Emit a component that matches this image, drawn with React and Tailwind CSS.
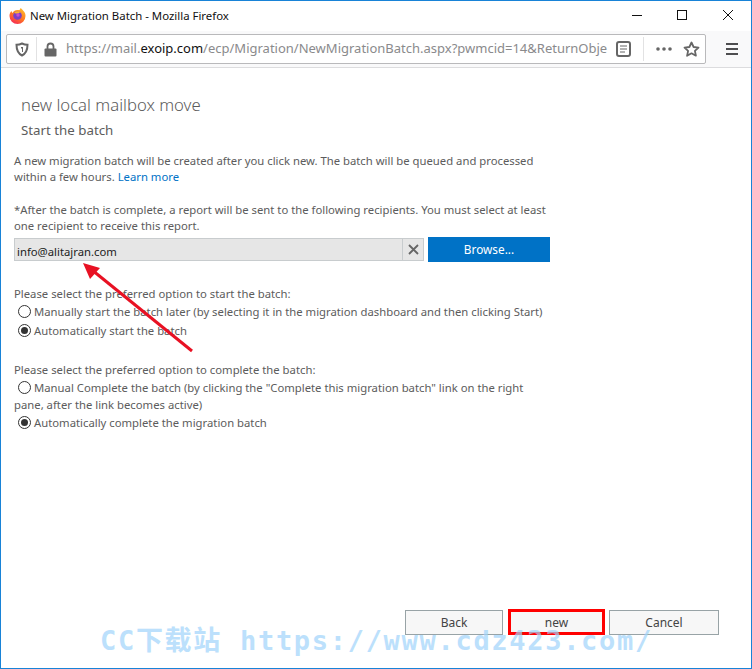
import React from 'react';

const uiFont = { fontFamily: '"Noto Sans", sans-serif' };

function FirefoxLogo() {
  return (
    <svg width="17" height="17" viewBox="0 0 17 17">
      <defs>
        <linearGradient id="fx" x1="0.8" y1="0" x2="0.2" y2="1">
          <stop offset="0" stopColor="#ffbd2e" />
          <stop offset="0.5" stopColor="#ff7a1f" />
          <stop offset="1" stopColor="#f5245c" />
        </linearGradient>
      </defs>
      <path d="M11.5 1c1 .8 2 1.4 2.8 2.8C16 5.6 16.5 7 16.5 9a8 8 0 1 1-16 0c0-2 .7-3.8 2-5 .2 1 .5 1.5 1 2C4.500 4 7 2.600 9 3c1 .2 2 .3 2.500-2z" fill="url(#fx)" />
      <circle cx="8.500" cy="8.500" r="4.300" fill="#7b3fc4" />
      <path d="M5 6c2-2.500 5.500-2.500 7.500 0-1.500-.8-2.500-.5-3 .5-1.500 0-3.500 0-4.500-.5z" fill="#ffb52b" />
      <circle cx="9" cy="8" r="1.700" fill="#c64bd0" />
    </svg>
  );
}

function WindowControls() {
  return (
    <div className="-mt-[2px] flex items-center">
      <svg width="12" height="12" viewBox="0 0 12 12" className="mr-[33px]">
        <path d="M1 6.500h10" stroke="#111" strokeWidth="1" />
      </svg>
      <svg width="12" height="12" viewBox="0 0 12 12" className="mr-[34px]">
        <rect x="1.500" y="1.500" width="9" height="9" fill="none" stroke="#111" strokeWidth="1" />
      </svg>
      <svg width="12" height="12" viewBox="0 0 12 12">
        <path d="M1 1l10 10M11 1L1 11" stroke="#111" strokeWidth="1" />
      </svg>
    </div>
  );
}

function TitleBar() {
  return (
    <div className="flex h-[30px] shrink-0 items-center justify-between bg-white pl-2 pr-[17px]">
      <div className="flex items-center gap-1">
        <FirefoxLogo />
        <span className="text-[11.400px] text-[#111]" style={uiFont}>New Migration Batch - Mozilla Firefox</span>
      </div>
      <WindowControls />
    </div>
  );
}

function ToolBar() {
  return (
    <div className="flex h-[37px] shrink-0 items-center border-b border-[#dcdcde] bg-[#f9f9fa] pl-[5px] pr-[13px]">
      <div className="flex h-[30px] min-w-0 flex-1 items-center rounded-[2px] border border-[#b9b9bb] bg-white">
        <svg width="14" height="15" viewBox="0 0 14 15" className="ml-[8px] shrink-0">
          <path d="M7 1.500c2 1 3.500 1.300 5.500 1.300 0 5-1 8.500-5.500 10.700C2.500 11.300 1.500 7.800 1.500 2.800c2 0 3.500-.3 5.500-1.300z" fill="none" stroke="#666" strokeWidth="2" />
          <path d="M6 5h2v5H7V6.500H6z" fill="#666" />
        </svg>
        <div className="ml-[7px] h-[24px] w-px shrink-0 bg-[#e2e2e3]" />
        <svg width="13" height="15" viewBox="0 0 13 15" className="ml-[7px] shrink-0">
          <path d="M3.500 7V4.500a3 3 0 0 1 6 0V7" fill="none" stroke="#666" strokeWidth="1.800" />
          <rect x="0.500" y="6.500" width="12" height="8" rx="1" fill="#666" />
        </svg>
        <div className="ml-[9px] min-w-0 flex-1 overflow-hidden whitespace-nowrap text-[13px] text-[#8a8a8c]" style={uiFont}>
          https://mail.<span className="text-[#111]">exoip.com</span>/ecp/Migration/NewMigrationBatch.aspx?pwmcid=14&amp;ReturnObje
        </div>
        <svg width="15" height="16" viewBox="0 0 15 16" className="ml-[7px] shrink-0">
          <rect x="1" y="1" width="13" height="14" rx="2" fill="none" stroke="#666" strokeWidth="2" />
          <path d="M4 5h7M4 8h7M4 11h5" stroke="#666" strokeWidth="1" />
        </svg>
        <div className="ml-[12px] h-[24px] w-px shrink-0 bg-[#e2e2e3]" />
        <svg width="16" height="4" viewBox="0 0 16 4" className="ml-[12px] shrink-0">
          <circle cx="2" cy="2" r="1.800" fill="#666" />
          <circle cx="8" cy="2" r="1.800" fill="#666" />
          <circle cx="14" cy="2" r="1.800" fill="#666" />
        </svg>
        <svg width="17" height="16" viewBox="0 0 17 16" className="ml-[11px] mr-[5px] shrink-0">
          <path d="M8.500 1.500l2.100 4.500 4.900.6-3.600 3.300 1 4.800-4.400-2.400-4.400 2.400 1-4.800L1.500 6.600l4.900-.6z" fill="none" stroke="#666" strokeWidth="1.800" strokeLinejoin="round" />
        </svg>
      </div>
      <svg width="12" height="12" viewBox="0 0 12 12" className="ml-[20px] shrink-0">
        <path d="M0 1h12M0 6h12M0 11h12" stroke="#4d4d4f" strokeWidth="1.800" />
      </svg>
    </div>
  );
}

function Radio({ checked }) {
  return (
    <span className="mr-[3px] ml-[4px] inline-flex h-[13px] w-[13px] shrink-0 items-center justify-center rounded-full border border-[#333] bg-white">
      {checked && <span className="h-[7px] w-[7px] rounded-full bg-[#333]" />}
    </span>
  );
}

function RadioRow({ checked, children }) {
  return (
    <div className="flex h-[19px] items-center whitespace-nowrap">
      <Radio checked={checked} />
      <span>{children}</span>
    </div>
  );
}

function FootButton({ className, children }) {
  return (
    <button className={`h-[25px] border border-[#98a3a6] bg-[#f7f7f7] text-[12px] text-[#444] ${className}`}>
      {children}
    </button>
  );
}

function Content() {
  return (
    <div className="flex min-h-0 flex-1 flex-col bg-white pl-[13px] pr-[32px] pb-[33px] text-[11.300px] leading-[17px] text-[#5c5c5c]" style={uiFont}>
      <div className="mt-[25px] ml-[7px] text-[16.700px] leading-[24px] font-light text-[#5c5c5c]">new local mailbox move</div>
      <div className="mt-[3px] ml-[7px] text-[13.300px] leading-[20px] text-[#5c5c5c]">Start the batch</div>

      <p className="mt-[13px] whitespace-nowrap leading-[16px]">
        A new migration batch will be created after you click new. The batch will be queued and processed<br />
        within a few hours. <a className="text-[#0072c6]">Learn more</a>
      </p>

      <p className="mt-[17px] whitespace-nowrap leading-[16px]">
        *After the batch is complete, a report will be sent to the following recipients. You must select at least<br />
        one recipient to receive this report.
      </p>

      <div className="mt-[3px] flex items-center">
        <div className="flex h-[23px] w-[410px] border border-[#c8ccce] bg-[#e6e6e6]">
          <div className="flex-1 pt-[2px] pl-[2px] text-[11.300px] leading-[21px] text-[#222]">info@alitajran.com</div>
          <div className="flex w-[21px] items-center justify-center border-l border-[#c8ccce]">
            <svg width="11" height="11" viewBox="0 0 11 11">
              <path d="M1 1l9 9M10 1l-9 9" stroke="#666" strokeWidth="1.800" />
            </svg>
          </div>
        </div>
        <button className="ml-[4px] h-[25px] w-[122px] bg-[#0072c6] text-[11.800px] text-white">Browse...</button>
      </div>

      <div className="mt-[23px]">Please select the preferred option to start the batch:</div>
      <RadioRow>Manually start the batch later (by selecting it in the migration dashboard and then clicking Start)</RadioRow>
      <RadioRow checked>Automatically start the batch</RadioRow>

      <div className="mt-[21px]">Please select the preferred option to complete the batch:</div>
      <RadioRow>Manual Complete the batch (by clicking the "Complete this migration batch" link on the right</RadioRow>
      <div className="-mt-[1px]">pane, after the link becomes active)</div>
      <RadioRow checked>Automatically complete the migration batch</RadioRow>

      <div className="mt-auto flex items-center justify-end">
        <FootButton className="w-[98px]">Back</FootButton>
        <FootButton className="ml-[5px] h-[26px] w-[97px] border-[3px] border-[#ff0000] bg-[#f7f7f7]">new</FootButton>
        <FootButton className="ml-[4px] w-[110px]">Cancel</FootButton>
      </div>
    </div>
  );
}

export default function App() {
  return (
    <div className="relative flex h-[669px] w-[752px] flex-col overflow-hidden border border-[#1883d7] bg-white">
      <TitleBar />
      <ToolBar />
      <Content />

      {/* red arrow pointing at the recipient */}
      <svg width="752" height="669" viewBox="0 0 752 669" className="pointer-events-none absolute -top-px -left-px">
        <path d="M192 351L92 270" stroke="#e81123" strokeWidth="3" />
        <path d="M83 263L100 268L90 279z" fill="#e81123" />
      </svg>

      {/* site watermark */}
      <div
        className="pointer-events-none absolute top-[622px] left-[99px] whitespace-nowrap text-[27px] leading-[36px] font-bold tracking-[1.700px] text-[#a0d4fb] opacity-70"
        style={{ fontFamily: '"DejaVu Sans Mono", "Noto Sans CJK SC", monospace' }}
      >
        CC下载站 https://www.cdz423.com/
      </div>
    </div>
  );
}
